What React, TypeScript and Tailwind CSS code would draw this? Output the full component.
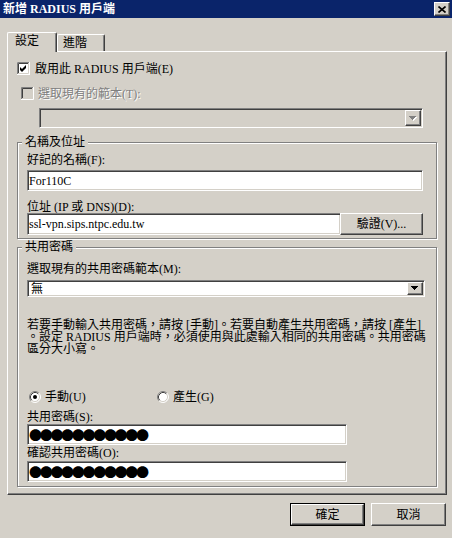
import React from "react";

// classic 3D edges
const raised =
  "border border-t-white border-l-white border-r-[#404040] border-b-[#404040] shadow-[inset_-1px_-1px_0_#808080]";
const sunken =
  "border border-t-[#808080] border-l-[#808080] border-r-white border-b-white shadow-[inset_1px_1px_0_#404040,inset_-1px_-1px_0_#d4d0c8]";
const etched =
  "border border-[#808080] shadow-[1px_1px_0_#fff,inset_1px_1px_0_#fff]";
const dimText = "text-[#808080] [text-shadow:1px_1px_0_#fff]";

function Check({ checked, disabled }: { checked?: boolean; disabled?: boolean }) {
  return (
    <svg width="13" height="13" viewBox="0 0 13 13" className="shrink-0">
      <rect x="0" y="0" width="13" height="13" fill={disabled ? "#d4d0c8" : "#fff"} />
      <path d="M0.5 12V0.5H12" stroke="#808080" fill="none" />
      <path d="M1.5 11V1.5H11" stroke="#404040" fill="none" />
      <path d="M0 12.5H12.5V0" stroke="#fff" fill="none" />
      <path d="M1 11.5H11.5V1" stroke="#d4d0c8" fill="none" />
      {checked && <polygon points="3,5 5,7 9,3 9,6 5,10 3,8" fill="#000" />}
    </svg>
  );
}

function Radio({ on }: { on?: boolean }) {
  return (
    <svg width="12" height="12" viewBox="0 0 12 12" className="shrink-0">
      <circle cx="6" cy="6" r="5" fill="#fff" />
      <path d="M2.11 9.89A5.5 5.5 0 0 1 9.89 2.11" stroke="#808080" fill="none" />
      <path d="M2.82 9.18A4.5 4.5 0 0 1 9.18 2.82" stroke="#404040" fill="none" />
      <path d="M9.89 2.11A5.5 5.5 0 0 1 2.11 9.89" stroke="#fff" fill="none" />
      <path d="M9.18 2.82A4.5 4.5 0 0 1 2.82 9.18" stroke="#d4d0c8" fill="none" />
      {on && <circle cx="6" cy="6" r="2" fill="#000" />}
    </svg>
  );
}

function Arrow({ disabled }: { disabled?: boolean }) {
  return (
    <svg width="8" height="5" viewBox="0 0 8 5">
      {disabled && <path d="M1 1h7v1h-1v1h-1v1h-1v1h-1v-1h-1v-1h-1v-1h-1z" fill="#fff" />}
      <path d="M0 0h7v1h-1v1h-1v1h-1v1h-1v-1h-1v-1h-1v-1h-1z" fill={disabled ? "#808080" : "#000"} />
    </svg>
  );
}

function Combo({ className, text, disabled }: { className: string; text?: string; disabled?: boolean }) {
  return (
    <div className={`${sunken} ${className} flex p-[1px] ${disabled ? "bg-[#d4d0c8]" : "bg-white"}`}>
      <div className="flex-1 flex items-center pl-[2px]">{text}</div>
      <div className={`${raised} w-[16px] bg-[#d4d0c8] flex items-center justify-center`}>
        <Arrow disabled={disabled} />
      </div>
    </div>
  );
}

function Group({ title, className, children }: { title: string; className: string; children: React.ReactNode }) {
  return (
    <div className={`${etched} w-[420px] flex flex-col pl-[9px] ${className}`}>
      <span className="-mt-[7px] ml-[-5px] px-[3px] w-fit bg-[#d4d0c8]">{title}</span>
      {children}
    </div>
  );
}

function Secret({ className }: { className: string }) {
  return (
    <div className={`${sunken} bg-white w-[320px] h-[21px] flex items-center pl-[1px] ${className}`}>
      <span className="font-['Noto_Sans_CJK_TC',sans-serif] text-[13px] leading-[13px] tracking-[-2.3px]">
        ●●●●●●●●●●●
      </span>
    </div>
  );
}

export default function App() {
  return (
    <div className="w-[452px] h-[538px] bg-[#d4d0c8] flex flex-col overflow-hidden text-[12px] leading-[12px] text-black font-['Liberation_Serif','Noto_Sans_CJK_TC',serif]">
      {/* title bar */}
      <div className="h-[18px] shrink-0 bg-[#0a246a] flex items-center justify-between pl-[3px] pr-[2px]">
        <span className="text-white font-bold">新增 RADIUS 用戶端</span>
        <div className={`${raised} w-[16px] h-[14px] bg-[#d4d0c8] flex items-center justify-center`}>
          <svg width="8" height="7" viewBox="0 0 8 7">
            <path d="M0.5 0.5L7.5 6.5M7.5 0.5L0.5 6.5" stroke="#000" strokeWidth="1.6" />
          </svg>
        </div>
      </div>

      {/* tabs */}
      <div className="flex items-end pt-[14px] pl-[7px]">
        <div className="relative z-10 w-[50px] h-[20px] mb-[-1px] bg-[#d4d0c8] border-t border-l border-r border-t-white border-l-white border-r-[#404040] shadow-[inset_-1px_0_0_#808080] rounded-t-[2px] pl-[7px] pt-[2px]">
          設定
        </div>
        <div className="w-[48px] h-[17px] border-t border-l border-r border-t-white border-l-white border-r-[#404040] shadow-[inset_-1px_0_0_#808080] rounded-t-[2px] pl-[5px] pt-[2px]">
          進階
        </div>
      </div>

      {/* tab page */}
      <div className="ml-[7px] w-[440px] h-[444px] shrink-0 border border-t-white border-l-white border-r-[#404040] border-b-[#404040] shadow-[inset_-1px_-1px_0_#808080] flex flex-col pl-[9px]">
        <div className="mt-[10px] h-[13px] flex items-center gap-[5px]">
          <Check checked />
          <span>啟用此 RADIUS 用戶端(E)</span>
        </div>
        <div className="mt-[12px] ml-[4px] h-[13px] flex items-center gap-[4px]">
          <Check disabled />
          <span className={dimText}>選取現有的範本(T):</span>
        </div>
        <Combo className="mt-[8px] ml-[22px] w-[384px] h-[20px]" disabled />

        <Group title="名稱及位址" className="mt-[14px] pb-[3px]">
          <span className="mt-[6px]">好記的名稱(F):</span>
          <div className={`${sunken} mt-[4px] bg-white w-[396px] h-[21px] flex items-center pl-[1px]`}>For110C</div>
          <span className="mt-[10px]">位址 (IP 或 DNS)(D):</span>
          <div className="flex h-[22px]">
            <div className={`${sunken} bg-white w-[314px] h-[22px] flex items-center pl-[1px]`}>
              ssl-vpn.sips.ntpc.edu.tw
            </div>
            <button className={`${raised} ml-[-1px] w-[83px] h-[22px] bg-[#d4d0c8] flex items-center justify-center`}>
              驗證(V)...
            </button>
          </div>
        </Group>

        <Group title="共用密碼" className="mt-[8px] pb-[4px]">
          <span className="mt-[10px]">選取現有的共用密碼範本(M):</span>
          <Combo className="mt-[5px] w-[398px] h-[17px]" text="無" />
          <div className="mt-[22px] whitespace-nowrap">
            <div>若要手動輸入共用密碼，請按 [手動]。若要自動產生共用密碼，請按 [產生]</div>
            <div>。設定 RADIUS 用戶端時，必須使用與此處輸入相同的共用密碼。共用密碼</div>
            <div>區分大小寫。</div>
          </div>
          <div className="mt-[36px] h-[12px] flex items-center">
            <div className="ml-[2px] w-[128px] flex items-center gap-[4px]">
              <Radio on />
              <span>手動(U)</span>
            </div>
            <div className="flex items-center gap-[4px]">
              <Radio />
              <span>產生(G)</span>
            </div>
          </div>
          <span className="mt-[8px]">共用密碼(S):</span>
          <Secret className="mt-[1px]" />
          <span className="mt-[2px]">確認共用密碼(O):</span>
          <Secret className="mt-[2px]" />
        </Group>
      </div>

      {/* buttons */}
      <div className="mt-[8px] flex justify-end gap-[6px] pr-[6px]">
        <button className="w-[75px] h-[23px] border border-black p-0">
          <div className={`${raised} w-full h-full bg-[#d4d0c8] flex items-center justify-center`}>確定</div>
        </button>
        <button className={`${raised} w-[75px] h-[23px] bg-[#d4d0c8] flex items-center justify-center`}>取消</button>
      </div>
    </div>
  );
}
